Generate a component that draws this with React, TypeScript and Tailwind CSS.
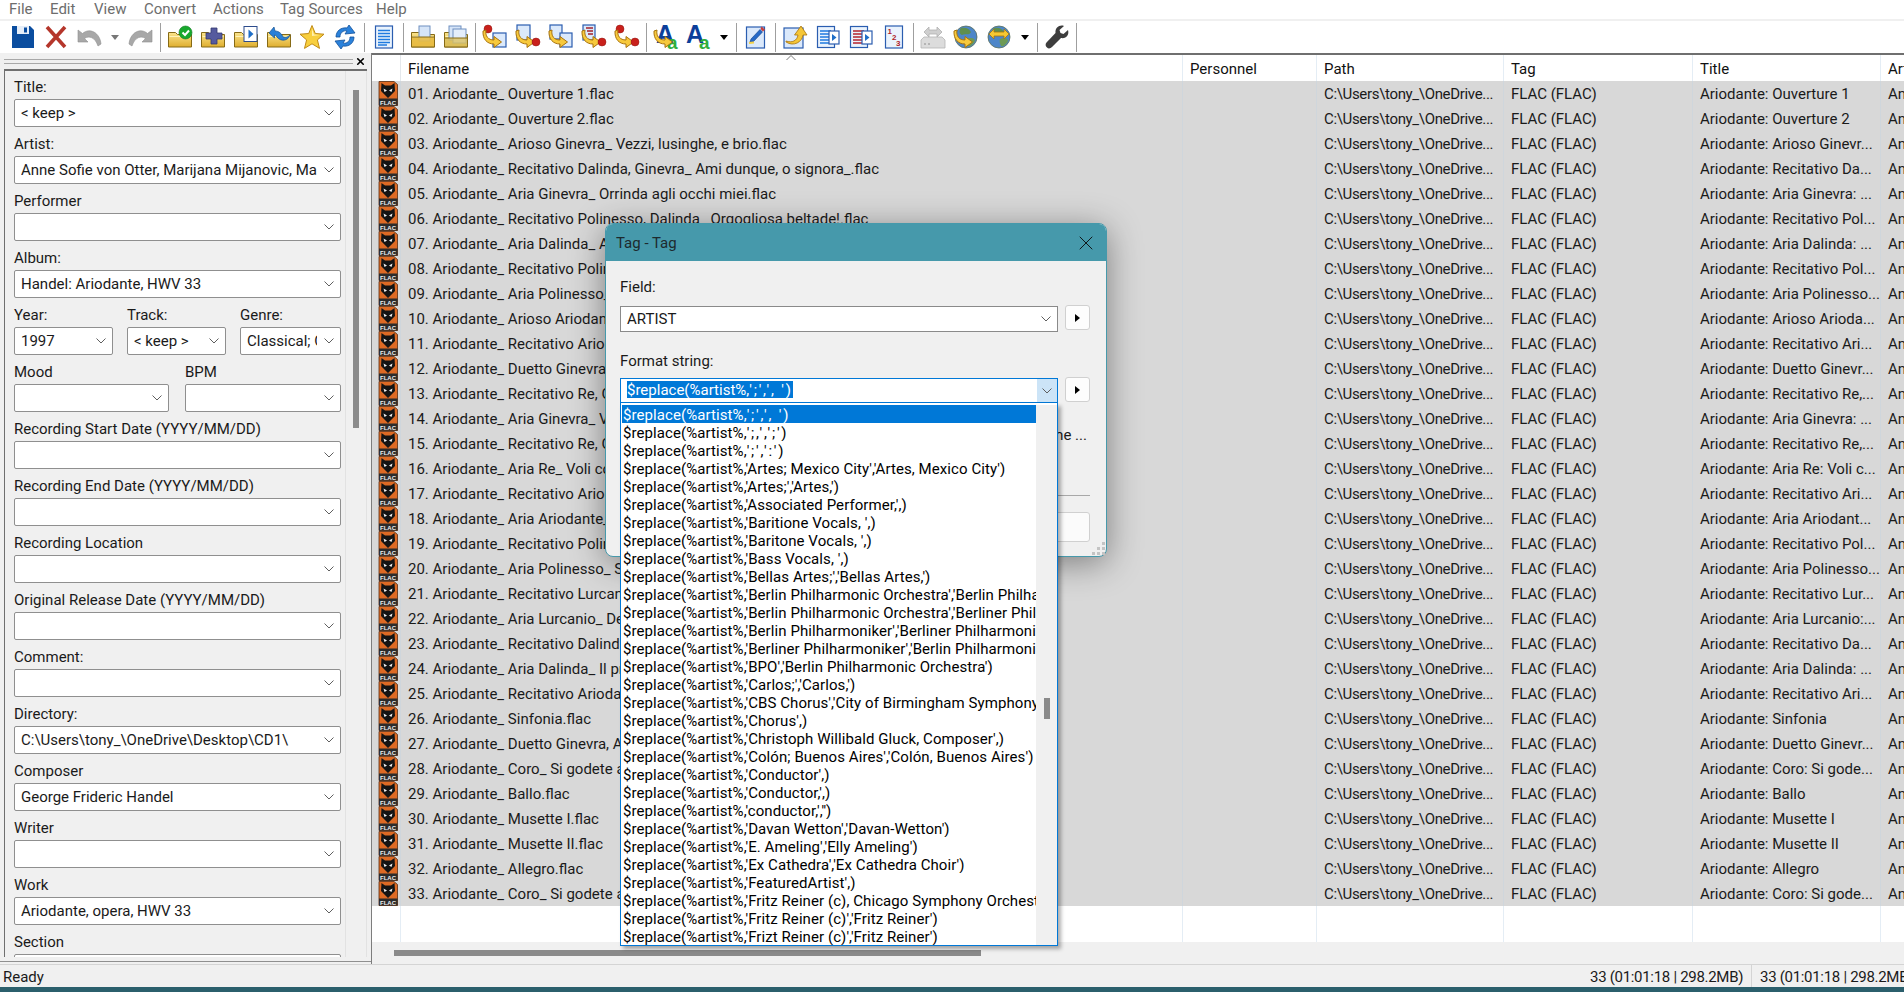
import { X } from 'lucide-react';

const fileNames = [
  '01. Ariodante_ Ouverture 1.flac',
  '02. Ariodante_ Ouverture 2.flac',
  '03. Ariodante_ Arioso Ginevra_ Vezzi, lusinghe, e brio.flac',
  '04. Ariodante_ Recitativo Dalinda, Ginevra_ Ami dunque, o signora_.flac',
  '05. Ariodante_ Aria Ginevra_ Orrinda agli occhi miei.flac',
  '06. Ariodante_ Recitativo Polinesso, Dalinda_ Orgogliosa beltade!.flac',
  '07. Ariodante_ Aria Dalinda_ Apportatrice.flac',
  '08. Ariodante_ Recitativo Polinesso.flac',
  '09. Ariodante_ Aria Polinesso_ Coperta.flac',
  '10. Ariodante_ Arioso Ariodante.flac',
  '11. Ariodante_ Recitativo Ariodante.flac',
  '12. Ariodante_ Duetto Ginevra, Ariodante.flac',
  '13. Ariodante_ Recitativo Re, Ginevra.flac',
  '14. Ariodante_ Aria Ginevra_ Volate.flac',
  '15. Ariodante_ Recitativo Re, Ginevra.flac',
  '16. Ariodante_ Aria Re_ Voli colla.flac',
  '17. Ariodante_ Recitativo Ariodante.flac',
  '18. Ariodante_ Aria Ariodante_ Con.flac',
  '19. Ariodante_ Recitativo Polinesso.flac',
  '20. Ariodante_ Aria Polinesso_ Spero.flac',
  '21. Ariodante_ Recitativo Lurcanio.flac',
  '22. Ariodante_ Aria Lurcanio_ Del mio.flac',
  '23. Ariodante_ Recitativo Dalinda.flac',
  '24. Ariodante_ Aria Dalinda_ Il primo.flac',
  '25. Ariodante_ Recitativo Ariodante.flac',
  '26. Ariodante_ Sinfonia.flac',
  '27. Ariodante_ Duetto Ginevra, Ariodante.flac',
  '28. Ariodante_ Coro_ Si godete al suono.flac',
  '29. Ariodante_ Ballo.flac',
  '30. Ariodante_ Musette I.flac',
  '31. Ariodante_ Musette II.flac',
  '32. Ariodante_ Allegro.flac',
  '33. Ariodante_ Coro_ Si godete al suono.flac',
];

const titles = [
  'Ariodante: Ouverture 1',
  'Ariodante: Ouverture 2',
  'Ariodante: Arioso Ginevr...',
  'Ariodante: Recitativo Da...',
  'Ariodante: Aria Ginevra: ...',
  'Ariodante: Recitativo Pol...',
  'Ariodante: Aria Dalinda: ...',
  'Ariodante: Recitativo Pol...',
  'Ariodante: Aria Polinesso...',
  'Ariodante: Arioso Arioda...',
  'Ariodante: Recitativo Ari...',
  'Ariodante: Duetto Ginevr...',
  'Ariodante: Recitativo Re,...',
  'Ariodante: Aria Ginevra: ...',
  'Ariodante: Recitativo Re,...',
  'Ariodante: Aria Re: Voli c...',
  'Ariodante: Recitativo Ari...',
  'Ariodante: Aria Ariodant...',
  'Ariodante: Recitativo Pol...',
  'Ariodante: Aria Polinesso...',
  'Ariodante: Recitativo Lur...',
  'Ariodante: Aria Lurcanio:...',
  'Ariodante: Recitativo Da...',
  'Ariodante: Aria Dalinda: ...',
  'Ariodante: Recitativo Ari...',
  'Ariodante: Sinfonia',
  'Ariodante: Duetto Ginevr...',
  'Ariodante: Coro: Si gode...',
  'Ariodante: Ballo',
  'Ariodante: Musette I',
  'Ariodante: Musette II',
  'Ariodante: Allegro',
  'Ariodante: Coro: Si gode...',
];

const formats = [
  "';',', ')",
  "';,',';')",
  "';',':')",
  "'Artes; Mexico City','Artes, Mexico City')",
  "'Artes;','Artes,')",
  "'Associated Performer,',)",
  "'Baritione Vocals, ',)",
  "'Baritone Vocals, ',)",
  "'Bass Vocals, ',)",
  "'Bellas Artes;','Bellas Artes,')",
  "'Berlin Philharmonic Orchestra','Berlin Philharmonic')",
  "'Berlin Philharmonic Orchestra','Berliner Philharmoniker')",
  "'Berlin Philharmoniker','Berliner Philharmoniker')",
  "'Berliner Philharmoniker','Berlin Philharmonic Orchestra')",
  "'BPO','Berlin Philharmonic Orchestra')",
  "'Carlos;','Carlos,')",
  "'CBS Chorus','City of Birmingham Symphony Chorus')",
  "'Chorus',)",
  "'Christoph Willibald Gluck, Composer',)",
  "'Colón; Buenos Aires','Colón, Buenos Aires')",
  "'Conductor',)",
  "'Conductor,',)",
  "'conductor,','')",
  "'Davan Wetton','Davan-Wetton')",
  "'E. Ameling','Elly Ameling')",
  "'Ex Cathedra','Ex Cathedra Choir')",
  "'FeaturedArtist',)",
  "'Fritz Reiner (c), Chicago Symphony Orchestra',)",
  "'Fritz Reiner (c)','Fritz Reiner')",
  "'Frizt Reiner (c)','Fritz Reiner')",
];

function Chevron() {
  return (
    <svg width="10" height="6" viewBox="0 0 10 6" className="shrink-0">
      <path d="M0.5 0.5 L5 5 L9.5 0.5" fill="none" stroke="#5f5f5f" strokeWidth="1" />
    </svg>
  );
}

function Combo({ value = '', width = 'w-[327px]' }: { value?: string; width?: string }) {
  return (
    <div className={`${width} h-[28px] flex items-center bg-white border border-[#8f8f8f] rounded-[2px] pl-[6px] shrink-0`}>
      <div className="flex-1 min-w-0 pt-px overflow-hidden whitespace-nowrap">{value}</div>
      <div className="w-[23px] flex justify-center shrink-0">
        <Chevron />
      </div>
    </div>
  );
}

function Field({ label, value }: { label: string; value?: string }) {
  return (
    <div className="h-[57px] shrink-0">
      <div className="h-[28px] pt-[5px] leading-[22px]">{label}</div>
      <Combo value={value} />
    </div>
  );
}

function Folder({ children }: { children?: React.ReactNode }) {
  return (
    <svg width="26" height="24" viewBox="0 0 26 24">
      <defs>
        <linearGradient id="fold" x1="0" y1="0" x2="0" y2="1">
          <stop offset="0" stopColor="#fbe58e" />
          <stop offset="1" stopColor="#dfae2e" />
        </linearGradient>
      </defs>
      <path d="M1.5 7.5 h7 l2 2 h14 v12.5 h-23 z" fill="url(#fold)" stroke="#866a16" strokeWidth="1" />
      <path d="M2.5 11.5 h21" stroke="#fff3b8" strokeWidth="1" />
      {children}
    </svg>
  );
}

function Page({ x = 4, y = 2, w = 17, h = 20 }: { x?: number; y?: number; w?: number; h?: number }) {
  return <rect x={x} y={y} width={w} height={h} fill="#dbe9fb" stroke="#2a5db0" strokeWidth="1.2" />;
}

function YellowArrow() {
  return (
    <path
      d="M4 6 C3 12 6 16 12 16 V12.5 L19.5 18 L12 23.5 V20 C5 20 0.5 15 1 7 z"
      fill="#f7c93c"
      stroke="#a8730e"
      strokeWidth="1"
    />
  );
}

function RedDot({ x, y }: { x: number; y: number }) {
  return <circle cx={x} cy={y} r="4" fill="#c9201b" stroke="#8e1512" strokeWidth="0.5" />;
}

function Svg({ children }: { children: React.ReactNode }) {
  return (
    <svg width="26" height="26" viewBox="0 0 26 26">
      {children}
    </svg>
  );
}

function Globe() {
  return (
    <>
      <circle cx="13" cy="13" r="11" fill="#4d86c9" stroke="#5b6f5a" strokeWidth="0.8" />
      <path d="M8 4 C12 3 16 4 18 8 C16 12 12 9 9 11 C6 10 6 6 8 4z" fill="#5f8f4e" />
      <path d="M14 15 C18 13 22 14 22 17 C20 21 17 23 15 22 C14 20 13 17 14 15z" fill="#6d9a55" />
    </>
  );
}

const icons: Record<string, React.ReactNode> = {
  save: (
    <Svg>
      <path d="M2 2 H20 L24 6 V24 H2 z" fill="#0a4d9f" />
      <rect x="7" y="2" width="12" height="8" fill="#e6eef8" />
      <rect x="14" y="3.5" width="3" height="5" fill="#0a4d9f" />
    </Svg>
  ),
  del: (
    <Svg>
      <path d="M4 3 L22 23 M22 3 L4 23" stroke="#b5362b" strokeWidth="3.6" fill="none" />
    </Svg>
  ),
  undo: (
    <Svg>
      <path d="M2 6 V18 H12 L8.5 14.5 C13 11.5 19 13 22 22 L25 20 C24 9 14 3 6.5 9.5 z" fill="#a8a8a8" stroke="#8e8e8e" strokeWidth="0.6" />
    </Svg>
  ),
  redo: (
    <Svg>
      <path d="M24 6 V18 H14 L17.5 14.5 C13 11.5 7 13 4 22 L1 20 C2 9 12 3 19.5 9.5 z" fill="#a8a8a8" stroke="#8e8e8e" strokeWidth="0.6" />
    </Svg>
  ),
  folderOk: (
    <Folder>
      <circle cx="18.5" cy="7.5" r="6.5" fill="#17a82d" stroke="#0d7a1e" strokeWidth="0.6" />
      <path d="M15.5 7.5 L18 10 L22 5.5" stroke="#fff" strokeWidth="2" fill="none" />
    </Folder>
  ),
  folderPlus: (
    <Folder>
      <path d="M11 3 H17 V8 H22 V14 H17 V19 H11 V14 H6 V8 H11 z" fill="#555a9e" stroke="#34386e" strokeWidth="0.8" />
    </Folder>
  ),
  folderPlay: (
    <Folder>
      <rect x="11" y="1.5" width="13" height="15" fill="#fff" stroke="#2d4c8c" strokeWidth="1" />
      <path d="M15.5 4.5 L20.5 9 L15.5 13.5 z" fill="#1e6ec8" />
    </Folder>
  ),
  folderBack: (
    <Folder>
      <path d="M3 8 L8 2 L9 6 C13 6 16 9 17 12 C20 13 22 12 24 10 C22 16 15 17 11 12 C10 10.5 9 10 8.5 10 L8.5 13 z" fill="#2a80d8" stroke="#14508f" strokeWidth="0.7" />
    </Folder>
  ),
  star: (
    <Svg>
      <path d="M13 1.5 L16.3 9.5 L25 10.2 L18.4 15.9 L20.5 24.4 L13 19.8 L5.5 24.4 L7.6 15.9 L1 10.2 L9.7 9.5 z" fill="#f8cf3e" stroke="#c08a16" strokeWidth="1" />
      <path d="M13 4.5 L15 10.5 L21 11 L13 12 z" fill="#fff1ae" />
    </Svg>
  ),
  refresh: (
    <Svg>
      <path d="M4 13 C4 7 9 3 15 4 L17 1 L23 9 L13 10 L15 7 C11 6 8 9 8 13 z" fill="#2b82db" stroke="#12509b" strokeWidth="0.8" />
      <path d="M22 13 C22 19 17 23 11 22 L9 25 L3 17 L13 16 L11 19 C15 20 18 17 18 13 z" fill="#2b82db" stroke="#12509b" strokeWidth="0.8" />
    </Svg>
  ),
  doc: (
    <Svg>
      <rect x="4.5" y="2" width="17" height="22" fill="#eaf3fd" stroke="#2a5db0" strokeWidth="1.2" />
      <path d="M7 6.5 H19 M7 9.5 H19 M7 12.5 H19 M7 15.5 H19 M7 18.5 H19 M7 21 H16" stroke="#1f7be0" strokeWidth="1.5" />
    </Svg>
  ),
  printA: (
    <Folder>
      <rect x="9" y="1" width="11" height="15" fill="#d6e5f8" stroke="#6f8fc0" strokeWidth="1" />
      <path d="M1.5 12 H24.5 V22 H1.5 z" fill="#e8bd45" fillOpacity="0.9" stroke="#866a16" strokeWidth="1" />
    </Folder>
  ),
  printB: (
    <Folder>
      <rect x="6" y="1" width="12" height="14" fill="#d6e5f8" stroke="#6f8fc0" strokeWidth="1" />
      <rect x="10" y="4" width="13" height="14" fill="#e4eefb" stroke="#6f8fc0" strokeWidth="1" />
      <path d="M1.5 13 H24.5 V22 H1.5 z" fill="#d9c161" fillOpacity="0.8" stroke="#866a16" strokeWidth="1" />
    </Folder>
  ),
  tagFile: (
    <Svg>
      <Page x={11} y={9} w={13} h={14} />
      <RedDot x={6} y={5} />
      <YellowArrow />
    </Svg>
  ),
  fileTag: (
    <Svg>
      <Page x={2} y={1} w={13} h={15} />
      <YellowArrow />
      <RedDot x={21} y={18} />
    </Svg>
  ),
  fileFile: (
    <Svg>
      <Page x={2} y={1} w={12} h={14} />
      <Page x={12} y={9} w={12} h={14} />
      <YellowArrow />
    </Svg>
  ),
  textTag: (
    <Svg>
      <Page x={2} y={1} w={12} h={15} />
      <path d="M5 4 H12 M6 7 H12 M7 10 H12" stroke="#a5222b" strokeWidth="1.3" />
      <YellowArrow />
      <RedDot x={21} y={18} />
    </Svg>
  ),
  dotDot: (
    <Svg>
      <RedDot x={6} y={5} />
      <YellowArrow />
      <RedDot x={21} y={18} />
    </Svg>
  ),
  caseA: (
    <Svg>
      <text x="3" y="19" fontSize="25" fontWeight="700" fill="#0c3f9a" fontFamily="'Liberation Sans', sans-serif">A</text>
      <text x="14" y="25" fontSize="19" fontWeight="700" fill="#2fae3c" fontFamily="'Liberation Sans', sans-serif">a</text>
      <YellowArrow />
    </Svg>
  ),
  caseB: (
    <Svg>
      <text x="0" y="19" fontSize="25" fontWeight="700" fill="#0c3f9a" fontFamily="'Liberation Sans', sans-serif">A</text>
      <text x="13" y="25" fontSize="19" fontWeight="700" fill="#2fae3c" fontFamily="'Liberation Sans', sans-serif">a</text>
    </Svg>
  ),
  note: (
    <Svg>
      <rect x="3.5" y="3" width="18" height="21" fill="#dbe9fb" stroke="#2a5db0" strokeWidth="1.2" />
      <path d="M8 15 L17 5.5 L19.5 8 L10.5 17.5 L7 18 z" fill="#2569c8" stroke="#133f85" strokeWidth="0.6" />
      <path d="M18.5 2.5 L22 5.5 L20 7.5 L17.5 5 z" fill="#c83d3d" />
      <path d="M6 19 L11 18.5" stroke="#f4d24a" strokeWidth="2" />
    </Svg>
  ),
  export: (
    <Svg>
      <rect x="2" y="4" width="19" height="20" fill="#dbe9fb" stroke="#2a5db0" strokeWidth="1.2" />
      <path d="M4 17 C10 19 15 17 16 11 H12.5 L19 2 L25 11 H21 C20 18 12 23 4 18 z" fill="#f5c637" stroke="#a8730e" strokeWidth="0.8" />
    </Svg>
  ),
  listPlay: (
    <Svg>
      <rect x="2.5" y="2.5" width="17" height="21" fill="#eaf3fd" stroke="#2a5db0" strokeWidth="1.2" />
      <path d="M5 7 H16 M5 10 H14 M5 13 H14 M5 16 H14 M5 19 H16" stroke="#1f7be0" strokeWidth="1.4" />
      <rect x="14" y="7" width="10" height="13" fill="#fff" stroke="#2a5db0" strokeWidth="1.2" />
      <path d="M17 10 L21.5 13.5 L17 17 z" fill="#1e6ec8" />
    </Svg>
  ),
  listRed: (
    <Svg>
      <rect x="2.5" y="2.5" width="17" height="21" fill="#eaf3fd" stroke="#2a5db0" strokeWidth="1.2" />
      <path d="M5 7 H16 M5 10 H14 M5 13 H14 M5 16 H14 M5 19 H16" stroke="#b5232e" strokeWidth="1.4" />
      <rect x="14" y="7" width="10" height="13" fill="#fff" stroke="#2a5db0" strokeWidth="1.2" />
      <path d="M17 10 L21.5 13.5 L17 17 z" fill="#1e6ec8" />
    </Svg>
  ),
  numbers: (
    <Svg>
      <rect x="4.5" y="2" width="17" height="22" fill="#eaf3fd" stroke="#2a5db0" strokeWidth="1.2" />
      <text x="6.5" y="10" fontSize="8" fontWeight="700" fill="#b01e2a" fontFamily="'Liberation Sans', sans-serif">1</text>
      <text x="11" y="15.5" fontSize="8" fontWeight="700" fill="#b01e2a" fontFamily="'Liberation Sans', sans-serif">2</text>
      <text x="15" y="22" fontSize="8" fontWeight="700" fill="#b01e2a" fontFamily="'Liberation Sans', sans-serif">3</text>
    </Svg>
  ),
  freedb: (
    <Svg>
      <path d="M1 16 L4 13 H22 L25 16 V24 H1 z" fill="#dcdcdc" stroke="#b4b4b4" strokeWidth="0.8" />
      <path d="M4 8 L9 3 V6 H17 V3 L22 8 L17 13 V10 H9 V13 z" fill="#cfcfcf" stroke="#b0b0b0" strokeWidth="0.8" />
      <circle cx="5" cy="20" r="1" fill="#a8a8a8" />
      <circle cx="9" cy="20" r="1" fill="#a8a8a8" />
    </Svg>
  ),
  globeArrow: (
    <Svg>
      <Globe />
      <YellowArrow />
    </Svg>
  ),
  globeSwap: (
    <Svg>
      <Globe />
      <path d="M3 10 L8 5 V8 H18 V5 L23 10 L18 15 V12 H8 V15 z" fill="#f6c832" stroke="#a8730e" strokeWidth="0.8" />
    </Svg>
  ),
  wrench: (
    <Svg>
      <path d="M24 6 L19.5 10 L16.5 9 L15.5 6 L20 2 C15.5 0.5 11 3.5 11.5 9 L2.5 18.5 C1 20 1.5 22.5 3 23.5 C4.5 25 6.5 24.5 8 23 L17 14 C22 15 25.5 11 24 6z" fill="#3d3d3d" />
    </Svg>
  ),
};

// ordered as in the bar: a name is an icon, 'sep' a divider, 'drop' / 'dropGray' a small arrow
const toolbar = [
  'save', 'del', 'undo', 'dropGray', 'redo', 'sep',
  'folderOk', 'folderPlus', 'folderPlay', 'folderBack', 'star', 'refresh', 'sep',
  'doc', 'sep',
  'printA', 'printB', 'sep',
  'tagFile', 'fileTag', 'fileFile', 'textTag', 'dotDot', 'sep',
  'caseA', 'caseB', 'drop', 'sep',
  'note', 'sep',
  'export', 'listPlay', 'listRed', 'numbers', 'sep',
  'freedb', 'globeArrow', 'globeSwap', 'drop', 'sep',
  'wrench', 'sep',
];

function ToolItem({ name }: { name: string }) {
  if (name === 'sep') {
    return (
      <div className="w-[6px] h-full flex justify-center shrink-0">
        <div className="w-px h-[29px] mt-[2px] bg-[#9f9f9f]" />
      </div>
    );
  }
  if (name === 'drop' || name === 'dropGray') {
    return (
      <div className="w-[18.5px] h-full flex items-center justify-center shrink-0">
        <div
          className={`w-0 h-0 border-l-[4.5px] border-r-[4.5px] border-t-[5px] border-l-transparent border-r-transparent ${name === 'drop' ? 'border-t-black' : 'border-t-[#777777]'}`}
        />
      </div>
    );
  }
  return <div className="w-[33px] h-full flex items-center justify-center shrink-0">{icons[name]}</div>;
}

function FlacIcon() {
  return (
    <svg width="20" height="25" viewBox="0 0 20 25" className="shrink-0">
      <path d="M1 0.5 H16 L19.5 3.5 V24.5 H1 z" fill="#dd6a24" stroke="#5a2c10" strokeWidth="0.8" />
      <path d="M3.5 2 L7 4.5 H13 L16.5 2 L17 10 L10 17 L3 10 z" fill="#141414" />
      <path d="M5.5 7.5 L9 9.5 L6.5 11 z M14.5 7.5 L11 9.5 L13.5 11 z" fill="#f2f2f2" />
      <rect x="1" y="17.5" width="18.5" height="7" fill="#2b2b2b" />
      <text x="10" y="23.5" textAnchor="middle" fontSize="6" fontWeight="700" fill="#f0f0f0" fontFamily="'Liberation Sans', sans-serif">
        FLAC
      </text>
    </svg>
  );
}

const menus = [
  ['File', 'w-[41px]'],
  ['Edit', 'w-[44px]'],
  ['View', 'w-[50px]'],
  ['Convert', 'w-[69px]'],
  ['Actions', 'w-[67px]'],
  ['Tag Sources', 'w-[96px]'],
  ['Help', 'w-[50px]'],
];

function Cell({ width, children, light }: { width: string; children?: React.ReactNode; light?: boolean }) {
  return (
    <div className={`${width} shrink-0 h-full pl-[7px] border-r ${light ? 'border-[#e4edf5]' : 'border-[#cfd6dc]'} overflow-hidden whitespace-nowrap`}>
      {children}
    </div>
  );
}

function PlayButton() {
  return (
    <div className="w-[25px] h-[25px] bg-[#fdfdfd] border border-[#d0d0d0] rounded-[3px] flex items-center justify-center shrink-0">
      <div className="w-0 h-0 border-t-[4.5px] border-b-[4.5px] border-l-[5px] border-t-transparent border-b-transparent border-l-black" />
    </div>
  );
}

export default function App() {
  return (
    <div className="relative w-[1904px] h-[992px] overflow-hidden bg-[#f0f0f0] text-[15px] text-[#1a1a1a] font-['Roboto',sans-serif]">
      <div className="h-[19px] bg-white flex items-center pl-[9px] text-[#6d6d6d] leading-[19px] overflow-hidden">
        {menus.map(([label, w]) => (
          <div key={label} className={`${w} shrink-0 whitespace-nowrap`}>
            {label}
          </div>
        ))}
      </div>
      <div className="h-[2px]" />
      <div className="h-[32px] bg-white flex pl-[6.5px]">
        {toolbar.map((name, i) => (
          <ToolItem key={i} name={name} />
        ))}
      </div>

      <div className="h-[911px] flex">
        <div className="w-[371px] shrink-0 flex flex-col border-r-0">
          <div className="h-[16px] flex items-center pl-[4px] shrink-0">
            <div className="w-[349px] h-[5px] border-t border-b border-[#a8a8a8]" />
            <X size={11} strokeWidth={3.5} className="ml-[2px] text-black" />
          </div>
          <div className="flex-1 min-h-0 mx-[4px] flex border-t-2 border-l border-[#6f6f6f] overflow-hidden">
            <div className="w-[340px] shrink-0 pl-[9px] overflow-hidden">
              <Field label="Title:" value="< keep >" />
              <Field label="Artist:" value="Anne Sofie von Otter, Marijana Mijanovic, Marijana Mijanovic" />
              <Field label="Performer" />
              <Field label="Album:" value="Handel: Ariodante, HWV 33" />
              <div className="h-[57px] flex gap-[14px]">
                <div>
                  <div className="h-[28px] pt-[5px] leading-[22px]">Year:</div>
                  <Combo value="1997" width="w-[99px]" />
                </div>
                <div>
                  <div className="h-[28px] pt-[5px] leading-[22px]">Track:</div>
                  <Combo value="< keep >" width="w-[99px]" />
                </div>
                <div>
                  <div className="h-[28px] pt-[5px] leading-[22px]">Genre:</div>
                  <Combo value="Classical; Classical" width="w-[101px]" />
                </div>
              </div>
              <div className="h-[57px] flex gap-[16px]">
                <div>
                  <div className="h-[28px] pt-[5px] leading-[22px]">Mood</div>
                  <Combo width="w-[155px]" />
                </div>
                <div>
                  <div className="h-[28px] pt-[5px] leading-[22px]">BPM</div>
                  <Combo width="w-[156px]" />
                </div>
              </div>
              <Field label="Recording Start Date (YYYY/MM/DD)" />
              <Field label="Recording End Date (YYYY/MM/DD)" />
              <Field label="Recording Location" />
              <Field label="Original Release Date (YYYY/MM/DD)" />
              <Field label="Comment:" />
              <Field label="Directory:" value="C:\Users\tony_\OneDrive\Desktop\CD1\" />
              <Field label="Composer" value="George Frideric Handel" />
              <Field label="Writer" />
              <Field label="Work" value="Ariodante, opera, HWV 33" />
              <Field label="Section" />
            </div>
            <div className="flex-1 border-l border-r border-[#e2e2e2] pt-[19px] flex justify-center">
              <div className="w-[6px] h-[338px] bg-[#8c8c8c]" />
            </div>
          </div>
          <div className="h-[4px] shrink-0" />
          <div className="h-px shrink-0 bg-[#8f8f8f]" />
          <div className="h-[2px] shrink-0" />
        </div>

        <div className="flex-1 min-w-0 flex flex-col border-l border-[#7d7d7d]">
          <div className="relative flex-1 min-h-0 flex flex-col bg-white border-t-2 border-[#6f6f6f]">
            <div className="h-[26px] flex leading-[28px] shrink-0 text-[#111111]">
              <div className="w-[29px] shrink-0 h-full border-r border-[#e4e8ec]" />
              <Cell width="w-[782px]" light>Filename</Cell>
              <Cell width="w-[134px]" light>Personnel</Cell>
              <Cell width="w-[187px]" light>Path</Cell>
              <Cell width="w-[189px]" light>Tag</Cell>
              <Cell width="w-[188px]" light>Title</Cell>
              <div className="flex-1 pl-[7px] overflow-hidden">Artist</div>
            </div>
            <svg width="10" height="6" viewBox="0 0 10 6" className="absolute left-[414px] top-0">
              <path d="M0.5 5 L5 0.5 L9.5 5" fill="none" stroke="#7a7a7a" strokeWidth="1" />
            </svg>
            {fileNames.map((name, i) => (
              <div key={name} className="h-[25px] flex bg-[#d8d8d8] leading-[27px] shrink-0">
                <div className="w-[29px] shrink-0 h-full pl-[6px] border-r border-[#cfd6dc]">
                  <FlacIcon />
                </div>
                <Cell width="w-[782px]">{name}</Cell>
                <Cell width="w-[134px]" />
                <Cell width="w-[187px]">
                  <span className="tracking-[-0.33px]">C:\Users\tony_\OneDrive...</span>
                </Cell>
                <Cell width="w-[189px]">FLAC (FLAC)</Cell>
                <Cell width="w-[188px]">{titles[i]}</Cell>
                <div className="flex-1 pl-[7px] overflow-hidden whitespace-nowrap">Anne Sofie von Otter</div>
              </div>
            ))}
            <div className="flex-1 flex">
              <div className="w-[29px] shrink-0 h-full border-r border-[#e4edf5]" />
              <Cell width="w-[782px]" light />
              <Cell width="w-[134px]" light />
              <Cell width="w-[187px]" light />
              <Cell width="w-[189px]" light />
              <Cell width="w-[188px]" light />
            </div>
          </div>
          <div className="h-[22px] shrink-0 pl-[22px] pt-[8px]">
            <div className="w-[587px] h-[6px] bg-[#8a8a8a]" />
          </div>
        </div>
      </div>

      <div className="h-px bg-[#d4d4d4]" />
      <div className="h-[22px] flex leading-[25px] overflow-hidden">
        <div className="flex-1 pl-[3px]">Ready</div>
        <div className="w-[161px] h-full pr-[9px] text-right whitespace-nowrap shrink-0 tracking-[-0.3px]">33 (01:01:18 | 298.2MB)</div>
        <div className="w-[153px] h-full pl-[8px] border-l border-[#d4d4d4] whitespace-nowrap overflow-hidden shrink-0 tracking-[-0.3px]">33 (01:01:18 | 298.2MB)</div>
      </div>
      <div className="h-[5px] bg-[#2b5f6c]" />

      {/* Tag dialog, floats over the file list */}
      <div className="absolute left-[605px] top-[223px] w-[502px] h-[334px] rounded-[8px] bg-[#f0f0f0] border border-[#4699ab] shadow-[0_6px_34px_rgba(0,0,0,0.42)]">
        <div className="h-[37px] bg-[#4699ab] rounded-t-[7px] flex items-center justify-between pl-[10px] pr-[8px] text-[#1d2a2e]">
          <span className="pt-px">Tag - Tag</span>
          <X size={24} strokeWidth={1} className="text-[#10181a]" />
        </div>
        <div className="pl-[14px] pr-[16px]">
          <div className="h-[22px] leading-[22px] mt-[15px]">Field:</div>
          <div className="flex items-start gap-[7px] mt-[8px]">
            <div className="w-[438px] h-[26px] flex items-center bg-white border border-[#8a8a8a] pl-[6px]">
              <div className="flex-1">ARTIST</div>
              <div className="w-[22px] flex justify-center">
                <Chevron />
              </div>
            </div>
            <div className="-mt-px">
              <PlayButton />
            </div>
          </div>
          <div className="h-[22px] leading-[22px] mt-[18px]">Format string:</div>
          <div className="flex items-start gap-[7px] mt-[6px]">
            <div className="w-[438px] h-[25px] flex items-center bg-white border border-[#0078d7] pl-[6px]">
              <div className="flex-1 min-w-0 whitespace-nowrap overflow-hidden">
                <span className="inline-block h-[17px] leading-[18px] bg-[#0078d7] text-white">
                  $replace(%artist%,<span className="tracking-[1.8px]">';',', ')</span>
                </span>
              </div>
              <div className="w-[20px] h-full bg-[#cce4f7] flex items-center justify-center shrink-0">
                <Chevron />
              </div>
            </div>
            <div className="-mt-px">
              <PlayButton />
            </div>
          </div>
          <div className="h-[22px] leading-[22px] mt-[21px] text-right pr-[3px]">Use the same ...</div>
          <div className="h-px bg-[#a8a8a8] mt-[49px]" />
          <div className="flex justify-end mt-[16px]">
            <div className="w-[100px] h-[30px] bg-[#fbfbfb] border border-[#d0d0d0] rounded-[3px]" />
          </div>
        </div>
        <div className="absolute right-[1px] bottom-[1px] grid grid-cols-3 gap-[2px]">
          <div />
          <div />
          <div className="w-[3px] h-[3px] bg-[#c4c4c4]" />
          <div />
          <div className="w-[3px] h-[3px] bg-[#c4c4c4]" />
          <div className="w-[3px] h-[3px] bg-[#c4c4c4]" />
          <div className="w-[3px] h-[3px] bg-[#c4c4c4]" />
          <div className="w-[3px] h-[3px] bg-[#c4c4c4]" />
          <div className="w-[3px] h-[3px] bg-[#c4c4c4]" />
        </div>

        {/* open drop-down of the format string box */}
        <div className="absolute left-[14px] top-[179px] w-[438px] h-[543px] flex bg-white border border-[#0078d7] border-t-0 shadow-[3px_3px_4px_rgba(0,0,0,0.32)] pt-[2px]">
          <div className="w-[415px] shrink-0 overflow-hidden pl-px">
            {formats.map((f, i) => (
              <div
                key={f}
                className={`h-[18px] leading-[20px] pl-px whitespace-nowrap overflow-hidden text-black tracking-[0.08px] ${i === 0 ? 'bg-[#0078d7] text-white' : ''}`}
              >
                $replace(%artist%,<span className={i < 3 ? 'tracking-[1.8px]' : ''}>{f}</span>
              </div>
            ))}
          </div>
          <div className="flex-1 bg-[#f0f0f0] flex justify-center">
            <div className="w-[6px] h-[21px] mt-[293px] bg-[#8a8a8a]" />
          </div>
        </div>
      </div>
    </div>
  );
}
